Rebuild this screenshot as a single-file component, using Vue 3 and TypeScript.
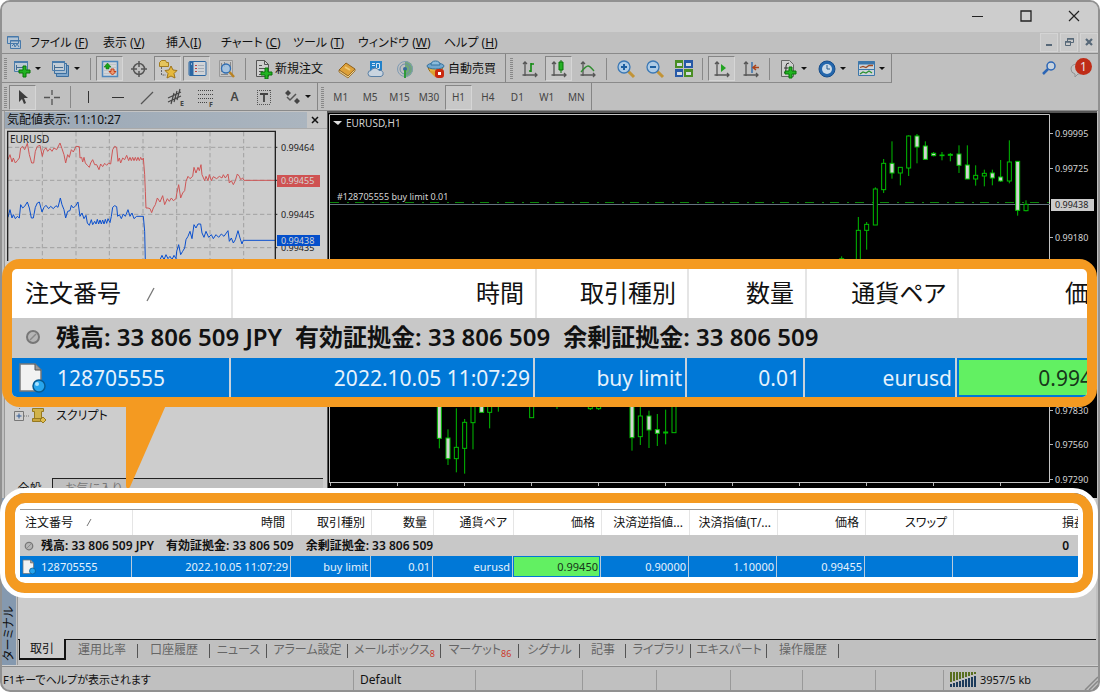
<script setup lang="ts">
interface Candle { x: number; hi: number; top: number; bottom: number; lo: number; filled: boolean }
type Row = [number, number, number, number, number, number]

const toCandle = (r: Row): Candle => ({ x: r[0], hi: r[1], top: r[2], bottom: r[3], lo: r[4], filled: r[5] === 1 })

const menus: [string, string][] = [
  ['ファイル ', 'F'], ['表示 ', 'V'], ['挿入', 'I'], ['チャート ', 'C'], ['ツール ', 'T'], ['ウィンドウ ', 'W'], ['ヘルプ ', 'H'],
]
const periods: string[] = ['M1', 'M5', 'M15', 'M30', 'H1', 'H4', 'D1', 'W1', 'MN']
const tabs: { label: string; badge?: string }[] = [
  { label: '取引' }, { label: '運用比率' }, { label: '口座履歴' }, { label: 'ニュース' }, { label: 'アラーム設定' },
  { label: 'メールボックス', badge: '8' }, { label: 'マーケット', badge: '86' }, { label: 'シグナル' }, { label: '記事' },
  { label: 'ライブラリ' }, { label: 'エキスパート' }, { label: '操作履歴' },
]
const headings: string[] = ['時間', '取引種別', '数量', '通貨ペア', '価格', '決済逆指値...', '決済指値(T/...', '価格', 'スワップ', '損益']
const order: string[] = ['2022.10.05 11:07:29', 'buy limit', '0.01', 'eurusd', '0.99450', '0.90000', '1.10000', '0.99455', '', '']
const balance: string[] = ['残高: 33 806 509 JPY', '有効証拠金: 33 806 509', '余剰証拠金: 33 806 509']

// Chart drawing units are thirds of a pixel.
const highCandles = ([
  [305, 445, 452, 460, 460, 0], [355, 327, 367, 465, 465, 0], [380, 342, 349, 367, 425, 0], [406, 238, 243, 351, 351, 0],
  [431, 153, 166, 245, 255, 0], [456, 100, 166, 195, 212, 1], [481, 178, 178, 195, 232, 0], [506, 82, 84, 180, 204, 0],
  [531, 78, 84, 117, 166, 1], [556, 100, 114, 154, 155, 1], [581, 132, 136, 143, 145, 1], [606, 132, 141, 143, 157, 0],
  [631, 135, 139, 142, 160, 0], [657, 112, 138, 172, 195, 1], [682, 112, 171, 213, 213, 1], [707, 172, 202, 213, 233, 0],
  [733, 185, 196, 204, 235, 0], [757, 185, 195, 210, 232, 1], [782, 156, 207, 219, 222, 1], [808, 97, 162, 219, 226, 0],
  [833, 160, 160, 307, 323, 1], [858, 277, 289, 308, 310, 0],
] as Row[]).map(toCandle)
const lowCandles = ([
  [1318, 0, 0, 130, 160, 1], [1344, 103, 129, 191, 210, 1], [1369, 40, 157, 191, 232, 0], [1394, 72, 82, 160, 236, 0],
  [1419, 0, 0, 83, 163, 0], [1445, 0, 0, 52, 52, 1], [1469, 0, 0, 52, 100, 0], [1495, 0, 10, 20, 50, 0],
  [1595, 0, 0, 68, 68, 0], [1671, 0, 10, 20, 42, 0], [1771, 0, 30, 41, 45, 0], [1796, 0, 30, 41, 45, 0],
  [1896, 0, 0, 128, 167, 1], [1921, 36, 63, 125, 150, 0], [1947, 47, 63, 105, 159, 1], [1972, 57, 104, 115, 153, 1],
  [1997, 44, 111, 114, 148, 0], [2022, 0, 0, 113, 113, 0],
] as Row[]).map(toCandle)

const timeTicks: number[] = Array.from({ length: 11 }, (_, i) => 330 + i * 67)
const priceTicks: { y: number; label: string }[] = [
  { y: 133, label: '0.99995' }, { y: 168, label: '0.99725' }, { y: 237, label: '0.99180' },
  { y: 410, label: '0.97830' }, { y: 444, label: '0.97560' }, { y: 479, label: '0.97290' },
]
const askLine = '24,155 30,140 36,162 40,150 46,165 52,158 58,150 62,120 68,115 74,125 82,106 88,140 95,165 101,165 106,130 112,115 120,112 127,145 132,125 138,120 143,130 150,122 156,130 162,120 170,125 180,105 186,122 192,140 197,165 203,140 208,148 214,125 220,132 228,115 238,116 240,150 245,148 248,162 252,148 256,165 262,172 268,178 272,165 278,155 284,170 290,170 297,185 302,168 308,176 314,166 320,172 326,165 332,168 338,125 344,115 350,118 354,160 358,150 362,165 368,150 374,155 380,142 386,158 390,148 394,158 398,148 402,158 406,148 410,158 414,148 418,158 422,148 426,156 430,150 434,200 436,250 438,300 444,300 450,302 455,314 460,300 466,290 472,270 480,282 488,263 494,290 502,272 508,280 514,270 520,278 528,272 530,258 536,230 542,270 548,255 554,248 558,220 564,205 570,212 578,205 582,178 588,195 594,178 598,188 603,170 606,200 614,218 618,205 624,218 628,200 634,218 640,206 650,212 658,205 666,210 670,200 676,210 684,198 688,225 694,218 700,230 706,218 712,198 718,205 722,215 728,210 732,217 826,217'
const bidLine = '24,328 30,305 36,330 40,320 46,332 52,325 58,330 62,290 68,300 74,295 82,282 88,300 94,330 100,330 106,298 112,285 118,282 126,312 132,298 138,292 146,302 152,295 160,302 168,293 174,298 181,270 186,290 192,305 197,330 203,310 210,308 214,292 220,300 228,292 234,282 240,325 246,315 252,332 258,322 262,345 268,352 274,335 278,350 284,340 288,348 292,334 296,348 300,336 304,348 308,336 312,348 316,334 320,346 324,332 330,344 334,325 338,298 344,293 350,296 353,325 358,320 364,332 370,318 376,325 384,305 390,325 396,315 402,332 410,325 430,325 434,370 436,460 478,460 486,442 492,455 498,440 504,452 510,445 516,455 522,442 528,452 530,430 536,410 542,440 548,430 554,420 558,395 564,385 570,370 576,392 582,350 588,360 594,348 602,348 606,375 612,388 618,370 626,388 634,380 640,392 648,380 656,388 664,378 672,385 684,368 688,400 694,390 700,405 706,395 714,368 720,390 726,408 730,397 826,397'
</script>

<template>
  <div class="window">
    <header class="titlebar">
      <button class="cap" aria-label="最小化"><svg width="12" height="12"><path d="M0 6.5h11" stroke="#222" /></svg></button>
      <button class="cap" aria-label="最大化"><svg width="12" height="12"><path d="M1 1h10v10H1z" fill="none" stroke="#222" stroke-width="1.3" /></svg></button>
      <button class="cap" aria-label="閉じる"><svg width="12" height="12"><path d="M1 1l10 10M11 1L1 11" stroke="#222" stroke-width="1.2" /></svg></button>
    </header>

    <nav class="menubar">
      <svg class="app-icon" width="16" height="16"><path d="M1.500 1.500h11v7h-11zM4.500 5.500h10v8h-10z" fill="#b4c5d5" stroke="#4779aa" /><path d="M1 2h11M4 6h10" stroke="#4779aa" /><path d="M6 11l2-2 1 3 2-3 2 3" fill="none" stroke="#4779aa" /></svg>
      <div class="menus">
        <button v-for="m in menus" :key="m[1]" class="menu">{{ m[0] }}(<u>{{ m[1] }}</u>)</button>
      </div>
      <div class="mdi">
        <button aria-label="子を最小化"><svg width="11" height="11"><path d="M2 8h6" stroke="#576878" stroke-width="2" /></svg></button>
        <button aria-label="子を元に戻す"><svg width="11" height="11"><path d="M3.500 4V1.500h6v4H7M1.500 4.500h5v4h-5z" fill="none" stroke="#576878" /><path d="M3 2h7M1 5h6" stroke="#576878" stroke-width="1.500" /></svg></button>
        <button aria-label="子を閉じる"><svg width="11" height="11"><path d="M2 2l6 6M8 2L2 8" stroke="#576878" stroke-width="2.200" /></svg></button>
      </div>
    </nav>

    <div class="toolrow first">
      <div class="group">
        <i class="grip"></i>
        <button class="tool drop" aria-label="新規チャート">
          <svg width="20" height="20"><path d="M2.500 2.500h13v10h-13z" fill="#bccad6" stroke="#4b7cab" /><path d="M2 3h14" stroke="#4b7cab" stroke-width="2" /><path d="M4.500 6v5M4 8.500h8" stroke="#446b90" /><path d="M11 7h3v4h4v3h-4v4h-3v-4H7v-3h4z" fill="#21b321" stroke="#087408" /></svg>
          <svg class="caret" width="6" height="4"><path d="M0 0h6L3 3z" /></svg>
        </button>
        <button class="tool drop" aria-label="表示設定">
          <svg width="20" height="20"><path d="M5.500 6.500h12v11h-12z" fill="#7ea6cc" stroke="#3c6f9f" /><path d="M3.500 4.500h12v10h-12z" fill="#a9bfd3" stroke="#3c6f9f" /><path d="M1.500 2.500h12v9h-12z" fill="#c3cdd6" stroke="#4b7cab" /><path d="M1 3h13" stroke="#4b7cab" stroke-width="2" /><path d="M3 8.500h9M3.500 6v5" stroke="#446b90" /></svg>
          <svg class="caret" width="6" height="4"><path d="M0 0h6L3 3z" /></svg>
        </button>
        <i class="sep"></i>
        <button class="tool on" aria-label="気配値表示"><svg width="20" height="20"><path d="M2.500 2.500h15v15h-15z" fill="#d2d5d8" stroke="#4e87bd" stroke-width="1.500" /><path d="M4 5.500h12M4 8.500h12M4 11.500h12M4 14.500h12" stroke="#bfc3c9" /><path d="M7.500 4l3.500 4H9v2H6V8H4z" fill="#19a319" stroke="#087408" stroke-width=".5" /><path d="M12.500 16l-3.500-3.500h2V10h3v2.500h2z" fill="#ee9a70" stroke="#c23d16" /></svg></button>
        <button class="tool" aria-label="データウィンドウ"><svg width="20" height="20"><circle cx="10" cy="10" r="5.500" fill="none" stroke="#555" stroke-width="1.500" /><path d="M10 2v6M10 12v6M2 10h6M12 10h6" stroke="#555" stroke-width="1.500" /></svg></button>
        <button class="tool on" aria-label="ナビゲーター"><svg width="20" height="20"><path d="M1.500 3.500l2-2h4l1 2h2v4h-9z" fill="#e5c45c" stroke="#a47d20" /><path d="M3.500 8v8H8" fill="none" stroke="#666" stroke-dasharray="2 1" /><path d="M13 7l2 4 4 .5-3 3 1 4.500-4-2-4 2 1-4.500-3-3 4-.5z" fill="#e5b83c" stroke="#9d731a" /></svg></button>
        <button class="tool on" aria-label="ターミナル"><svg width="20" height="20"><rect x="2" y="2.500" width="17" height="14" rx="1" fill="#d0d3d7" stroke="#2a66a3" /><path d="M4.500 3v13" stroke="#2a66a3" stroke-width="4" /><path d="M4 5h1" stroke="#fff" /><path d="M8 6.500h2M8 9.500h2M8 12.500h2" stroke="#b44" /><path d="M11 6.500h6M11 9.500h6M11 12.500h6" stroke="#a3acb6" /></svg></button>
        <button class="tool" aria-label="ストラテジーテスター"><svg width="20" height="20"><path d="M3.500 1.500h13v16h-13z" fill="#c6c6c6" stroke="#999" /><path d="M5.500 4v9M8.500 3v5M14.500 3v8M5 15.500h7" stroke="#888" /><circle cx="10" cy="9.500" r="4.500" fill="#9cc0e4" fill-opacity=".8" stroke="#2f6db3" stroke-width="1.300" /><path d="M13.500 13l4.500 5" stroke="#b98222" stroke-width="2.500" /></svg></button>
        <i class="sep wide"></i>
        <button class="tool text"><svg width="22" height="20"><path d="M3.500 1.500h8l4 4v12h-12z" fill="#cfcfcf" stroke="#555" /><path d="M11.500 1.500v4h4M6 6.500h3M6 9.500h7M6 12.500h4M6 15.500h4" fill="none" stroke="#555" /><path d="M12 9h3v4h4v3h-4v4h-3v-4H8v-3h4z" fill="#21b321" stroke="#087408" /></svg>新規注文</button>
        <button class="tool" aria-label="メタエディター"><svg width="20" height="20"><path d="M2 11l7-7 9 6-7 7z" fill="#dda13a" stroke="#8f611c" /><path d="M2 11v2l9 6 7-7v-2l-7 7z" fill="#f0d795" stroke="#8f611c" stroke-width=".8" /><path d="M8 8l5 3" stroke="#f0ca77" stroke-width="2" /></svg></button>
        <button class="tool" aria-label="VPS"><svg width="20" height="20"><path d="M4 2h12v10H4z" fill="#2181c9" /><path d="M6 4.500h3M6 6.500h3M10.500 4.500h3v5h-3z" fill="none" stroke="#d4e6f5" /><path d="M5 17.500a3 3 0 0 1 0-6 4.500 4.500 0 0 1 8 0 3 3 0 0 1 2 6z" fill="#c9d4df" stroke="#597fa4" /></svg></button>
        <button class="tool" aria-label="シグナル"><svg width="20" height="20"><path d="M10 2a8 8 0 0 1 0 16z" fill="#71a877" /><circle cx="10" cy="10" r="7.500" fill="none" stroke="#7e9bb4" /><circle cx="10" cy="10" r="5" fill="none" stroke="#6b8ca9" /><circle cx="10" cy="10" r="2" fill="#35699c" /><path d="M10 11v8" stroke="#2f9a39" stroke-width="2" /></svg></button>
        <button class="tool text auto"><svg width="22" height="20"><path d="M3 8q1 6 7 6t8-6z" fill="#e6b13d" stroke="#94691c" /><path d="M4 12l6 6 6-5z" fill="#dba12e" /><ellipse cx="10.500" cy="7" rx="8.500" ry="3" fill="#71a7cf" stroke="#35729f" /><path d="M6 6q0-4 4.500-4T15 6z" fill="#8bbcdd" stroke="#35729f" /><rect x="10" y="10" width="9" height="9" rx="3" fill="#c9290f" /><path d="M13 13h3v3h-3z" fill="#fff" /></svg>自動売買</button>
      </div>
      <div class="group">
        <i class="grip"></i>
        <button class="tool" aria-label="バーチャート"><svg width="20" height="20"><path d="M5 3v14M2.500 16h14M3 5l2-2 2 2M15 14l2 2-2 2" fill="none" stroke="#555" stroke-width="1.300" /><path d="M11 4v9M9 12h2M11 5h3" stroke="#108a10" stroke-width="1.600" /></svg></button>
        <button class="tool on" aria-label="ローソク足"><svg width="20" height="20"><path d="M5 3v14M2.500 16h14M3 5l2-2 2 2M15 14l2 2-2 2" fill="none" stroke="#555" stroke-width="1.300" /><path d="M12 1v13" stroke="#087408" /><path d="M10 3h4v8h-4z" fill="#26b126" stroke="#087408" /></svg></button>
        <button class="tool" aria-label="ラインチャート"><svg width="20" height="20"><path d="M5 3v14M2.500 16h14M3 5l2-2 2 2M15 14l2 2-2 2" fill="none" stroke="#555" stroke-width="1.300" /><path d="M3 13q5-6 7-6t6 5" fill="none" stroke="#2f8c2f" stroke-width="1.300" /></svg></button>
        <i class="sep"></i>
        <button class="tool" aria-label="拡大"><svg width="20" height="20"><path d="M12 12l6 6" stroke="#c29437" stroke-width="3" /><circle cx="8" cy="8" r="6" fill="#aecbe5" stroke="#3b78b5" stroke-width="1.300" /><path d="M5 8h6M8 5v6" stroke="#1d5fa1" stroke-width="2" /></svg></button>
        <button class="tool" aria-label="縮小"><svg width="20" height="20"><path d="M12 12l6 6" stroke="#c29437" stroke-width="3" /><circle cx="8" cy="8" r="6" fill="#aecbe5" stroke="#3b78b5" stroke-width="1.300" /><path d="M5 8h6" stroke="#1d5fa1" stroke-width="2" /></svg></button>
        <button class="tool" aria-label="整列"><svg width="20" height="20"><path d="M1 1h8v8H1zM10 10h9v8h-9z" fill="#4a8e25" /><path d="M10 1h9v8h-9zM1 10h8v8H1z" fill="#2759a7" /><path d="M3 4h5v3H3zM12 4h5v3h-5zM3 13h5v3H3zM12 13h5v3h-5z" fill="#d5dce2" /></svg></button>
        <i class="sep"></i>
        <button class="tool on" aria-label="自動スクロール"><svg width="20" height="20"><path d="M5 3v14M2.500 16h14M3 5l2-2 2 2M15 14l2 2-2 2" fill="none" stroke="#555" stroke-width="1.300" /><path d="M9 5l5 4-5 4z" fill="#22a322" /></svg></button>
        <button class="tool" aria-label="チャートシフト"><svg width="20" height="20"><path d="M5 3v14M2.500 16h14M3 5l2-2 2 2M15 14l2 2-2 2" fill="none" stroke="#555" stroke-width="1.300" /><path d="M11 3v11" stroke="#3971ad" stroke-width="1.500" /><path d="M12 8.500h6M15 6l-3 2.500 3 2.500" fill="none" stroke="#ac431a" stroke-width="1.500" /></svg></button>
        <i class="sep"></i>
        <button class="tool drop" aria-label="インディケーター">
          <svg width="20" height="20"><path d="M3.500 1.500h8l4 4v12h-12z" fill="#cfcfcf" stroke="#666" /><path d="M6 14q2 0 2-4V7q0-3 3-3M6 9h4" fill="none" stroke="#333" /><path d="M11 8h3v4h4v3h-4v4h-3v-4H7v-3h4z" fill="#21b321" stroke="#087408" /></svg>
          <svg class="caret" width="6" height="4"><path d="M0 0h6L3 3z" /></svg>
        </button>
        <button class="tool drop" aria-label="時間足">
          <svg width="20" height="20"><circle cx="10" cy="10" r="8" fill="#2467ad" stroke="#174e8b" /><circle cx="10" cy="10" r="5" fill="#cbdae7" /><path d="M10 6v4h3" fill="none" stroke="#275b8d" /></svg>
          <svg class="caret" width="6" height="4"><path d="M0 0h6L3 3z" /></svg>
        </button>
        <button class="tool drop" aria-label="定型チャート">
          <svg width="20" height="20"><path d="M2.500 2.500h16v14h-16z" fill="#ccd3d9" stroke="#3c77ab" /><path d="M2 4h17" stroke="#3c77ab" stroke-width="3" /><path d="M2 10.500h17" stroke="#3c77ab" /><path d="M4 8.500l3-1 3 1 3-2 4 0" fill="none" stroke="#9f4a22" stroke-width="1.300" /><path d="M4 15l3-2 3 1 3-2 3 2" fill="none" stroke="#2a9230" stroke-width="1.300" /></svg>
          <svg class="caret" width="6" height="4"><path d="M0 0h6L3 3z" /></svg>
        </button>
      </div>
      <div class="right-tools">
        <button class="tool" aria-label="検索"><svg width="20" height="20"><circle cx="12" cy="7" r="4" fill="#c9d3dd" stroke="#2b65b5" stroke-width="1.500" /><path d="M9 10l-5 5" stroke="#2b65b5" stroke-width="2.500" /></svg></button>
        <button class="tool notice" aria-label="通知 1 件"><svg width="20" height="20"><path d="M1 10q0-5 7-5t7 5-7 5l-3 3v-3q-4-1-4-5z" fill="#c4c4c4" stroke="#929292" /></svg><span class="count">1</span></button>
      </div>
    </div>

    <div class="toolrow">
      <div class="group">
        <i class="grip"></i>
        <button class="tool on" aria-label="カーソル"><svg width="20" height="20"><path d="M6 3v12l3-3 2 5 2-1-2-5h4z" fill="#3c3c3c" /></svg></button>
        <button class="tool" aria-label="十字カーソル"><svg width="20" height="20"><path d="M10 3v5M10 12v6M2 10.500h6M12 10.500h6" stroke="#555" stroke-width="1.300" /></svg></button>
        <i class="sep"></i>
        <button class="tool" aria-label="垂直線"><svg width="20" height="20"><path d="M8.500 4v12" stroke="#333" /></svg></button>
        <button class="tool" aria-label="水平線"><svg width="20" height="20"><path d="M3 10.500h12" stroke="#333" /></svg></button>
        <button class="tool" aria-label="トレンドライン"><svg width="20" height="20"><path d="M3 17L15 5" stroke="#555" stroke-width="1.300" /></svg></button>
        <button class="tool" aria-label="等距離チャネル"><svg width="20" height="20"><path d="M1 11l13-6M1 15l13-6M4 17l3-11M7 15l3-11M10 13l3-11" stroke="#444" stroke-width="1.200" /><text x="13" y="19" class="mini">E</text></svg></button>
        <button class="tool" aria-label="フィボナッチ"><svg width="20" height="20"><path d="M2 3.500h15M2 7.500h15M2 11.500h15M2 15.500h9" stroke="#444" stroke-dasharray="1 1" /><text x="13" y="20" class="mini">F</text></svg></button>
        <button class="tool letter">A</button>
        <button class="tool" aria-label="テキストラベル"><svg width="20" height="20"><path d="M3 3.500h14M3 17.500h14M3.500 3v14M16.500 3v14" fill="none" stroke="#555" stroke-dasharray="1 1" /><path d="M6 7h8M10 7v8" stroke="#444" stroke-width="1.800" /></svg></button>
        <button class="tool drop" aria-label="矢印">
          <svg width="20" height="20"><path d="M6 3l3 3-3 3-3-3zM15 11l3 3-3 3-3-3z" fill="#444" /><path d="M5 10l3 3 6-6" fill="none" stroke="#555" stroke-width="1.500" /></svg>
          <svg class="caret" width="6" height="4"><path d="M0 0h6L3 3z" /></svg>
        </button>
      </div>
      <div class="group period-group">
        <i class="grip"></i>
        <div class="periods">
          <button v-for="p in periods" :key="p" class="tool period" :class="{ on: p === 'H1' }">{{ p }}</button>
        </div>
      </div>
    </div>

    <main class="workspace">
      <aside class="side">
        <div class="pane-head"><span>気配値表示: 11:10:27</span><button aria-label="閉じる"><svg width="8" height="8"><path d="M1 1l6 6M7 1L1 7" stroke="#111" stroke-width="1.500" /></svg></button></div>
        <svg class="tick-chart" viewBox="5 129 322 132" preserveAspectRatio="xMinYMin slice">
          <g transform="translate(0 108) scale(.33333)" fill="none" stroke-width="3">
            <path d="M127 72v400M228 72v400M328 72v400M429 72v400M530 72v400M630 72v400M731 72v400M24 118h800M24 217h800M24 319h800M24 419h800" stroke="#a2a2a2" stroke-dasharray="13 8" />
            <polyline :points="askLine" stroke="#ce5555" />
            <polyline :points="bidLine" stroke="#0a4fce" />
            <path d="M23 470V70H826V470" stroke="#222" stroke-width="4" />
            <path d="M826 118h6M826 217h6M826 319h6M826 419h6" stroke="#222" />
          </g>
          <text x="10" y="143" class="label">EURUSD</text>
          <text x="281" y="151" class="axis">0.99464</text>
          <text x="281" y="218" class="axis">0.99445</text>
          <text x="281" y="251" class="axis">0.99435</text>
          <rect x="277" y="175" width="43" height="12" fill="#cf5252" />
          <text x="281" y="184" class="axis light">0.99455</text>
          <rect x="277" y="235" width="43" height="11" fill="#044fcb" />
          <text x="281" y="244" class="axis light">0.99438</text>
        </svg>
        <div class="tree">
          <svg width="34" height="20"><path d="M5.500 0v4M10 10h6" stroke="#777" stroke-dasharray="1 1" /><path d="M.5 5.500h9v9h-9z" fill="#d0d0d0" stroke="#777" /><path d="M2.500 10h5M5 7.500v5" stroke="#315a96" /><path d="M18.500 2.500h11v3h-2v7h-7v-7h-2z" fill="#d1b34a" stroke="#96791f" /><path d="M18.500 12.500h9l-1 3h-8z" fill="#c9a53c" stroke="#96791f" /><path d="M29 11l3 3-3 3-3-3z" fill="#e0bd4f" stroke="#96791f" /></svg>
          <span>スクリプト</span>
        </div>
        <div class="side-tabs"><button class="active">全般</button><button>お気に入り</button></div>
      </aside>

      <section class="chart">
        <svg viewBox="328 113 769 385" preserveAspectRatio="xMinYMin slice">
          <path d="M329.500 483V114.500H1049.500V482.500H330" fill="none" stroke="#c4c4c4" />
          <path v-for="t in timeTicks" :key="t" :d="`M${t}.5 483v3`" stroke="#b8b8b8" />
          <path d="M333 121h9l-4 4z" fill="#ddd" />
          <text x="346" y="127" class="label light">EURUSD,H1</text>
          <path d="M330 204.500h720" stroke="#64727e" />
          <path d="M330 202.500h720" stroke="#0b860b" stroke-dasharray="9 8 2 6" />
          <text x="337" y="200" class="axis light">#128705555 buy limit 0.01</text>
          <g transform="translate(740 108) scale(.33333)" stroke="#00be00" stroke-width="3">
            <g v-for="c in highCandles" :key="c.x">
              <path :d="`M${c.x} ${c.hi}V${c.lo}`" />
              <rect :x="c.x - 6" :y="c.top" width="12" :height="c.bottom - c.top" :fill="c.filled ? '#d2d2d2' : '#000'" />
            </g>
          </g>
          <g transform="translate(0 395) scale(.33333)" stroke="#00be00" stroke-width="3">
            <g v-for="c in lowCandles" :key="c.x">
              <path :d="`M${c.x} ${c.hi}V${c.lo}`" />
              <rect :x="c.x - 6" :y="c.top" width="12" :height="c.bottom - c.top" :fill="c.filled ? '#d2d2d2' : '#000'" />
            </g>
          </g>
          <g v-for="p in priceTicks" :key="p.label">
            <path :d="`M1050 ${p.y}.5h3`" stroke="#b8b8b8" />
            <text x="1055" :y="p.y + 4" class="axis light">{{ p.label }}</text>
          </g>
          <rect x="1051" y="199" width="43" height="12" fill="#cbcbcb" />
          <text x="1055" y="208" class="axis">0.99438</text>
        </svg>
      </section>

      <div class="callout">
        <div class="clip">
          <table class="orders big">
            <colgroup><col class="a"><col class="b"><col class="c"><col class="d"><col class="c"><col></colgroup>
            <thead><tr><th class="first">注文番号<svg class="sort" width="10" height="16"><path d="M1 15L8 2" stroke="#777" stroke-width="1.300" /></svg></th><th v-for="h in headings.slice(0, 5)" :key="h">{{ h }}</th></tr></thead>
            <tbody>
              <tr class="balance"><td colspan="6"><div class="sum"><svg class="dot" viewBox="0 0 16 16"><circle cx="8" cy="8" r="6" fill="#b5b5b5" stroke="#777" stroke-width="2" /><path d="M5 11l6-6" stroke="#888" stroke-width="1.500" /></svg><span v-for="b in balance" :key="b">{{ b }}</span></div></td></tr>
              <tr class="order"><td class="first"><div class="id"><svg class="doc" viewBox="0 0 28 30"><path d="M2 1h15l6 6v21H2z" fill="#f2f2f2" stroke="#777" stroke-width="1.500" /><path d="M17 1v6h6" fill="#999" stroke="#555" /><circle cx="21" cy="23" r="6" fill="#27a5ed" stroke="#075a91" stroke-width="1.500" /><circle cx="19" cy="21" r="2" fill="#a9e2ff" /></svg>128705555</div></td><td v-for="(v, i) in order.slice(0, 5)" :key="i" :class="{ price: i === 4 }">{{ v }}</td></tr>
            </tbody>
          </table>
        </div>
        <svg class="pointer" width="42" height="85"><path d="M0 0H40L4 82Q1 86 0 81z" fill="#f49a21" /></svg>
      </div>
    </main>

    <section class="terminal">
      <div class="strip"><span>ターミナル</span></div>
      <div class="term-body">
        <div class="blank"></div>
        <div class="tabs">
          <button v-for="(t, i) in tabs" :key="t.label" :class="{ active: i === 0 }">{{ t.label }}<sub v-if="t.badge">{{ t.badge }}</sub></button>
        </div>
      </div>
      <div class="highlight">
        <div class="clip">
          <table class="orders small">
            <colgroup><col class="a"><col class="b"><col class="c"><col class="d"><col class="c"><col class="e"><col class="e"><col class="e"><col class="e"><col class="e"><col></colgroup>
            <thead><tr><th class="first">注文番号<svg class="sort" width="6" height="9"><path d="M1 8l4-7" stroke="#777" /></svg></th><th v-for="(h, i) in headings" :key="i">{{ h }}</th></tr></thead>
            <tbody>
              <tr class="balance"><td colspan="10"><div class="sum"><svg class="dot" viewBox="0 0 16 16"><circle cx="8" cy="8" r="6" fill="#b5b5b5" stroke="#777" stroke-width="2" /><path d="M5 11l6-6" stroke="#888" stroke-width="1.500" /></svg><span v-for="b in balance" :key="b">{{ b }}</span></div></td><td class="profit">0</td></tr>
              <tr class="order"><td class="first"><div class="id"><svg class="doc" viewBox="0 0 28 30"><path d="M2 1h15l6 6v21H2z" fill="#f2f2f2" stroke="#777" stroke-width="1.500" /><path d="M17 1v6h6" fill="#999" stroke="#555" /><circle cx="21" cy="23" r="6" fill="#27a5ed" stroke="#075a91" stroke-width="1.500" /></svg>128705555</div></td><td v-for="(v, i) in order" :key="i" :class="{ price: i === 4 }">{{ v }}</td></tr>
            </tbody>
          </table>
        </div>
      </div>
    </section>

    <footer class="status">
      <span class="hint">F1キーでヘルプが表示されます</span><span>Default</span><span></span><span></span><span></span><span></span><span></span><span></span>
      <span class="net"><svg width="26" height="15"><path d="M1 0v10M4 0v9M7 0v8M10 0v7M13 0v6M16 0v5M19 0v4M22 0v3M25 0v2" stroke="#596f20" stroke-width="2" /><path d="M1 12v3M4 11v4M7 10v5M10 9v6M13 8v7M16 7v8M19 6v9M22 5v10M25 4v11" stroke="#1d3c5c" stroke-width="2" /></svg>3957/5 kb</span>
      <svg class="resize" width="14" height="14"><path d="M1 14L14 1M5 14l9-9M9 14l5-5" stroke="#888" stroke-width="1.500" /></svg>
    </footer>
  </div>
</template>

<style>
body { margin: 0; background: #fff; }
</style>

<style scoped>
.window {
  box-sizing: border-box; display: flex; flex-direction: column; min-height: 100vh;
  border: 2px solid #919191; border-radius: 10px; background: #c0c0c0; color: #111;
  font: 12px/16px "Noto Sans", "Noto Sans CJK JP", sans-serif; font-feature-settings: "palt";
}
button { padding: 0; border: 0; background: none; color: inherit; font: inherit; font-feature-settings: inherit; white-space: nowrap; }
svg { display: block; flex: none; }

.titlebar { display: flex; justify-content: flex-end; height: 30px; background: #cdcdcd; border-radius: 8px 8px 0 0; }
.cap { display: grid; place-items: center; width: 48px; height: 28px; }

.menubar { display: flex; box-sizing: border-box; height: 22px; border-bottom: 1px solid #8a8a8a; }
.app-icon { margin: 3px 8px 0 4px; }
.menus { display: grid; grid-template-columns: 73px 63px 55px 72px 65px 86px 60px; flex: 1; }
.menu { padding-top: 1px; text-align: left; }
.mdi { display: flex; gap: 2px; padding-top: 1px; }
.mdi button { display: grid; place-items: center; box-sizing: border-box; width: 18px; height: 19px; background: #c9c9c9; border: 1px solid #d4d4d4; }

.toolrow { display: flex; height: 28px; border-bottom: 1px solid #8a8a8a; box-sizing: border-box; }
.toolrow.first { height: 29px; border: 0; }
.group { display: flex; align-items: center; box-sizing: border-box; padding-top: 1px; border-right: 1px solid #858585; }
.first .group { border-bottom: 1px solid #8a8a8a; }
.grip { width: 3px; height: 21px; margin: 0 1px 0 2px; background: repeating-linear-gradient(#888 0 1px, #c0c0c0 1px 2px); }
.first .group + .group .grip { margin: 0 2px 0 4px; }
.tool { display: flex; align-items: center; justify-content: center; box-sizing: border-box; width: 27px; height: 25px; margin: 0 1px; border: 1px solid transparent; flex: none; }
.tool.on { border-color: #858585 #d6d6d6 #d6d6d6 #858585; background: #c8c8c8; }
.tool.drop { width: 37px; gap: 3px; justify-content: flex-start; padding-left: 2px; }
.tool.text { width: 79px; justify-content: flex-start; }
.tool.auto { width: 84px; gap: 1px; padding-left: 4px; }
.caret { fill: #111; }
.sep { width: 1px; height: 22px; margin: 0 4px; background: #888; }
.sep.wide { margin: 0 5px; }
.letter { color: #444; font-weight: 600; }
.mini { font: bold 7px "Noto Sans", sans-serif; fill: #444; }
.right-tools { display: flex; align-items: center; margin-left: auto; padding-right: 4px; gap: 2px; }
.notice { position: relative; }
.count { position: absolute; right: 0; top: 1px; width: 17px; height: 17px; border-radius: 9px; background: #bf2c17; color: #e5e5e5; font-size: 12px; line-height: 17px; }
.period-group .grip { margin: 0 2px 0 3px; }
.periods { display: flex; width: 265px; }
.period { flex: 1; color: #444; font-size: 10px; }

.workspace { position: relative; display: flex; flex: 1 0 387px; }
.side { display: flex; flex-direction: column; flex: none; width: 323px; margin-left: 2px; background: #cdcdcd; border-left: 1px solid #999; box-sizing: border-box; }
.pane-head { display: flex; align-items: center; height: 17px; background: #c4c4c4; border-bottom: 1px solid #aaa; }
.pane-head span { flex: none; width: 300px; padding-left: 2px; background: linear-gradient(90deg, #9aa7b5, #abb5bf); }
.pane-head button { margin-left: 4px; }
.tick-chart { width: 100%; height: 132px; }
.axis { font: 9px "Noto Sans", sans-serif; fill: #222; }
.label { font: 10px "Noto Sans", sans-serif; fill: #222; }
.axis.light, .label.light { fill: #d3d3d3; }
.tree { display: flex; align-items: center; gap: 8px; margin: auto 0 52px 9px; }
.side-tabs { display: flex; height: 19px; border-top: 1px solid #222; margin-right: 4px; background: #c0c0c0; }
.side-tabs button { padding: 0 12px; color: #777; }
.side-tabs .active { width: 48px; margin-top: -1px; padding: 1px 0 0 2px; border-right: 1px solid #222; background: #cdcdcd; color: #111; }
.chart { flex: 1; min-width: 0; margin-right: 1px; border: 1px solid #555; border-width: 2px 0 0 1px; background: #000; }
.chart svg { width: 100%; height: 385px; }

.callout { position: absolute; left: 0; right: 1px; top: 148px; z-index: 2; border: 10px solid #f49a21; border-radius: 18px; background: #f49a21; }
.clip { overflow: hidden; border-radius: 5px; background: #fff; }
.pointer { position: absolute; left: 114px; top: 136px; z-index: 4; }

.orders { border-collapse: separate; border-spacing: 0; table-layout: fixed; text-align: right; white-space: nowrap; }
.orders th, .orders td { box-sizing: border-box; overflow: hidden; font-weight: 400; }
.orders .first { text-align: left; }
.balance td { background: #c8c8c8; text-align: left; color: #111; }
.orders .balance td { font-weight: 600; }
.order td { background: #0078d7; color: #e6f2fc; }
.order .price { background: #62f062; color: #17371a; }
.sum, .id { display: flex; align-items: center; }
.sort { display: inline-block; }

.big { width: calc(100% + 37px); font-size: 24px; line-height: 30px; }
.big .a { width: 219px; } .big .b { width: 304px; } .big .c { width: 152px; } .big .d { width: 118px; }
.big th { height: 49px; padding: 0 11px 2px 0; border-left: 2px solid #e5e5e5; }
.big th.first { padding-left: 13px; border: 0; }
.big .sort { margin-left: 25px; }
.big .balance td { height: 40px; padding: 0 0 2px 13px; }
.big .sum { gap: 13px; }
.big .dot { width: 16px; height: 16px; margin-right: 2px; }
.big .order td { height: 39px; padding: 0 3px 0 0; border-right: 2px solid #c8d2dc; font-size: 21px; }
.big .order .price { box-shadow: inset 2px 2px #0078d7, inset 0 -2px #0078d7; padding-right: 6px; }
.big .id { gap: 11px; padding-left: 6px; }
.big .doc { width: 28px; height: 30px; }

.terminal { position: relative; display: flex; height: 168px; border-bottom: 1px solid #d0d0d0; box-sizing: border-box; }
.strip { display: flex; align-items: flex-end; width: 14px; background: #8599af; }
.strip span { writing-mode: vertical-rl; text-orientation: sideways; transform: rotate(180deg); line-height: 14px; padding-top: 4px; }
.term-body { display: flex; flex-direction: column; flex: 1; min-width: 0; margin-left: 1px; border-left: 1px solid #999; }
.blank { flex: 1; background: #cdcdcd; margin-right: 2px; }
.tabs { display: grid; grid-template-columns: 47px 72px 72px 57px 81px 93px 78px 61px 46px 65px 76px 72px; height: 25px; margin-right: 2px; padding-left: 1px; border-top: 1px solid #111; }
.tabs button { position: relative; height: 20px; color: #666; }
.tabs button::after { content: ""; position: absolute; right: 0; top: 4px; height: 14px; border-right: 1px solid #555; }
.tabs .active { height: 21px; margin-top: -1px; border: 1px solid #111; border-width: 0 2px 2px 1px; background: #cdcdcd; color: #111; }
.tabs .active::after { display: none; }
.tabs sub { color: #cc3a2c; font-size: 9px; line-height: 9px; }

.highlight { position: absolute; left: -2px; right: 0; top: -10px; z-index: 3; margin: 5px; padding: 6px 5px; border: 10px solid #f49a21; border-radius: 20px; outline: 5px solid #fff; background: #fff; background-clip: padding-box; }
.highlight .clip { border-radius: 0; border-top: 1px solid #999; }
.small { width: calc(100% + 14px); font-size: 12px; line-height: 16px; }
.small .a { width: 112px; } .small .b { width: 159px; } .small .c { width: 80px; } .small .d { width: 62px; } .small .e { width: 88px; }
.small th { height: 25px; padding: 0 6px 0 0; border-left: 1px solid #e5e5e5; }
.small th.first { padding-left: 5px; border: 0; }
.small .sort { margin-left: 13px; }
.small .balance td { height: 21px; padding: 0 0 0 4px; }
.small .balance .profit { padding-right: 23px; text-align: right; }
.small .sum { gap: 12px; }
.small .dot { width: 10px; height: 10px; margin-right: -5px; }
.small .order td { height: 21px; padding: 0 2px 0 0; border-right: 1px solid #b9cbdc; font-size: 11px; }
.small .order .price { box-shadow: inset 0 0 0 1px #0078d7; }
.small .id { gap: 5px; padding-left: 2px; }
.small .doc { width: 14px; height: 16px; }

.status { position: relative; display: grid; grid-template-columns: 352px 122px 107px 74px 74px 72px 73px 68px 1fr; align-items: center; height: 24px; padding-top: 2px; border-top: 1px solid #8a8a8a; box-sizing: border-box; }
.status span { height: 20px; box-sizing: border-box; line-height: 20px; padding-left: 1px; border-right: 1px solid #999; }
.status .hint { font-size: 11px; }
.status span + span { padding-left: 6px; }
.status .net { display: flex; align-items: center; gap: 4px; border: 0; font-size: 11px; }
.resize { position: absolute; right: 0; bottom: 0; }
</style>
